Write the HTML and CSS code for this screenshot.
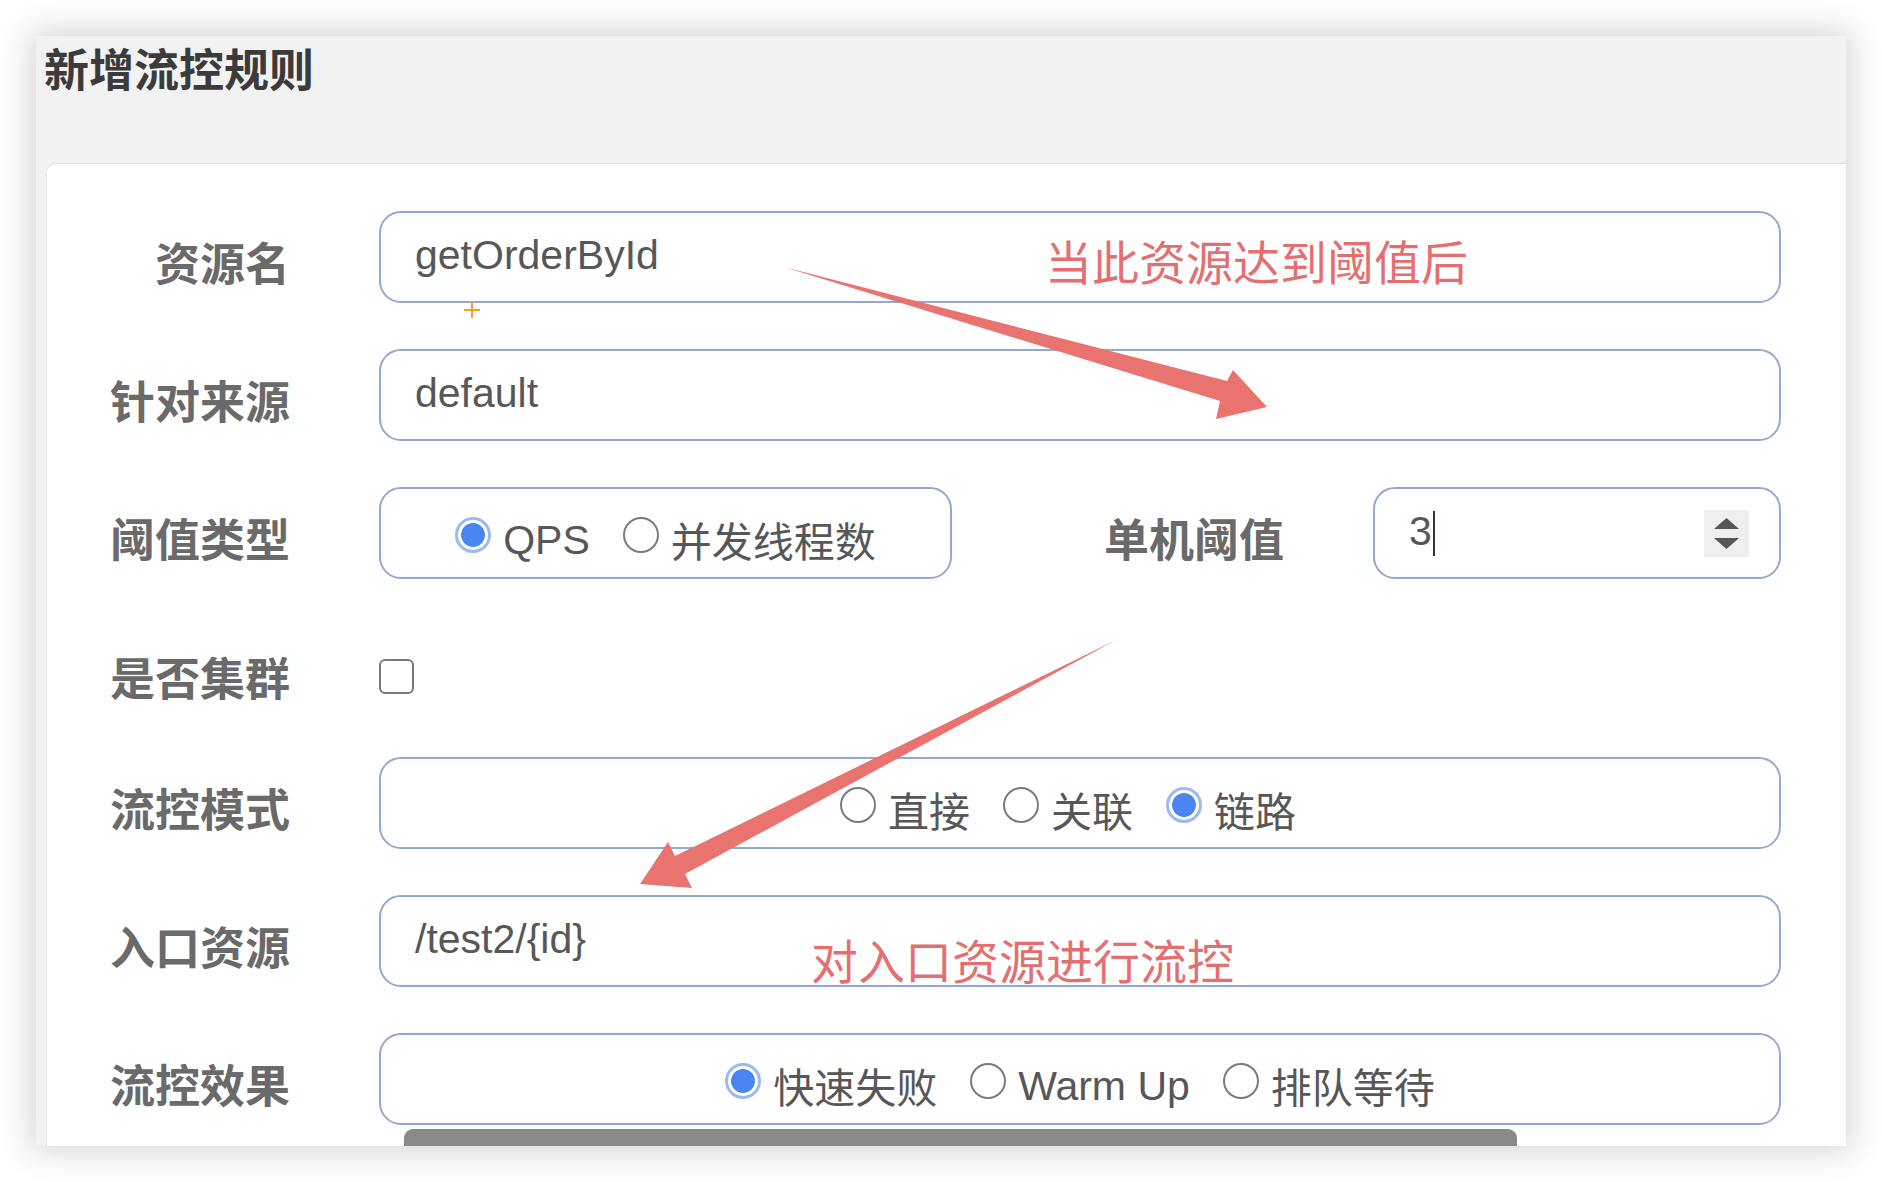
FILE: index.html
```html
<!DOCTYPE html>
<html lang="zh-CN">
<head>
<meta charset="utf-8">
<title>新增流控规则</title>
<link rel="stylesheet" href="styles.css">
</head>
<body>
<div class="modal">
  <div class="modal-header">
    <h3 class="modal-title">新增流控规则</h3>
  </div>
  <div class="modal-body">
    <form class="form">
      <div class="form-row">
        <label class="form-label">资源名</label>
        <div class="field"><span class="field-text">getOrderById</span></div>
      </div>
      <div class="form-row">
        <label class="form-label">针对来源</label>
        <div class="field"><span class="field-text">default</span></div>
      </div>
      <div class="form-row">
        <label class="form-label">阈值类型</label>
        <div class="field field--radios field--type">
          <span class="radio radio--checked"></span><span class="radio-text radio-text--latin">QPS</span>
          <span class="radio"></span><span class="radio-text">并发线程数</span>
        </div>
        <label class="form-label sub-label">单机阈值</label>
        <div class="field field--number">
          <span class="num-value"><span class="field-text">3</span><span class="caret"></span></span>
          <span class="spinner">
            <svg width="25" height="11" viewBox="0 0 25 11"><polygon points="12.5,0 25,11 0,11" fill="#555"/></svg>
            <svg width="25" height="11" viewBox="0 0 25 11"><polygon points="0,0 25,0 12.5,11" fill="#555"/></svg>
          </span>
        </div>
      </div>
      <div class="form-row form-row--check">
        <label class="form-label form-label--check">是否集群</label>
        <span class="checkbox"></span>
      </div>
      <div class="form-row">
        <label class="form-label">流控模式</label>
        <div class="field field--radios field--mode">
          <span class="radio"></span><span class="radio-text">直接</span>
          <span class="radio"></span><span class="radio-text">关联</span>
          <span class="radio radio--checked"></span><span class="radio-text">链路</span>
        </div>
      </div>
      <div class="form-row">
        <label class="form-label">入口资源</label>
        <div class="field"><span class="field-text">/test2/{id}</span></div>
      </div>
      <div class="form-row">
        <label class="form-label">流控效果</label>
        <div class="field field--radios">
          <span class="radio radio--checked"></span><span class="radio-text">快速失败</span>
          <span class="radio"></span><span class="radio-text radio-text--latin">Warm Up</span>
          <span class="radio"></span><span class="radio-text">排队等待</span>
        </div>
      </div>
    </form>
  </div>
  <div class="scroll-thumb"></div>
</div>

<svg class="annot" width="1882" height="1182" viewBox="0 0 1882 1182">
  <polygon points="784,267 1227,381 1233,370 1267,407 1216,419 1220,401" fill="#e9746f"/>
  <polygon points="1116,640 675,856 668,842 640,884 692,888 685,874" fill="#e9746f"/>
</svg>
<div class="note note--top">当此资源达到阈值后</div>
<div class="note note--bottom">对入口资源进行流控</div>
<div class="cursor-plus"></div>
</body>
</html>
```

FILE: styles.css
```css
html, body {
  margin: 0;
}
body {
  position: relative;
  width: 1882px;
  height: 1182px;
  overflow: hidden;
  background: #ffffff;
  padding: 36px 0 0 36px;
  box-sizing: border-box;
  font-family: "Noto Sans CJK SC", sans-serif;
}

.modal {
  position: relative;
  width: 1810px;
  height: 1110px;
  background: #f2f2f2;
  box-shadow: 0 0 30px 6px rgba(0, 0, 0, 0.16);
  overflow: hidden;
  display: flex;
  flex-direction: column;
}

.modal-header {
  flex: none;
  height: 127px;
  box-sizing: border-box;
  padding: 9px 0 0 8px;
}
.modal-title {
  margin: 0;
  font-size: 45px;
  line-height: 1;
  font-weight: 700;
  color: #3b3b3b;
}

.modal-body {
  flex: 1;
  margin-left: 10px;
  background: #ffffff;
  border-top: 1px solid #e0e0e0;
  border-left: 1px solid #e6e6e6;
  border-top-left-radius: 10px;
  padding-top: 47px;
}

.form {
  margin: 0;
  padding-right: 65px;
}
.form-row {
  display: flex;
  align-items: center;
  height: 92px;
  margin-bottom: 46px;
}
.form-row--check {
  height: 86px;
  padding-top: 16px;
  box-sizing: border-box;
}

.form-label {
  flex: none;
  width: 243px;
  margin-right: 89px;
  text-align: right;
  font-size: 45px;
  font-weight: 700;
  line-height: 1;
  color: #6a6a6a;
  padding-top: 9px;
}
.form-label--check {
  padding-top: 0;
}
.sub-label {
  flex: 1;
  width: auto;
}

.field {
  flex: none;
  box-sizing: border-box;
  width: 1402px;
  height: 92px;
  border: 2px solid #93a9d0;
  border-radius: 22px;
  display: flex;
  align-items: center;
  padding-left: 34px;
  font-family: "Liberation Sans", "Noto Sans CJK SC", sans-serif;
  font-size: 41px;
  color: #575757;
}
.field-text {
  line-height: 1;
  padding-bottom: 3px;
}

.field--radios {
  justify-content: center;
  padding-left: 0;
}
.field--type {
  width: 573px;
}
.field--mode {
  padding-right: 24px;
}

.field--number {
  width: 408px;
  justify-content: space-between;
  padding-right: 30px;
}
.num-value {
  display: flex;
  align-items: center;
}
.caret {
  width: 2px;
  height: 45px;
  background: #333;
  margin-left: 1px;
}
.spinner {
  width: 45px;
  height: 47px;
  background: #efefef;
  display: flex;
  flex-direction: column;
  align-items: center;
  justify-content: center;
  gap: 9px;
}
.spinner svg {
  display: block;
}

.radio {
  flex: none;
  box-sizing: border-box;
  width: 36px;
  height: 36px;
  border-radius: 50%;
  border: 2.5px solid #7b7b7b;
  background: #ffffff;
  margin-right: 12px;
  margin-top: 4px;
}
.radio--checked {
  border: 3px solid #9bb9f3;
  background: radial-gradient(circle, #4a85f2 0 11.5px, #ffffff 12.3px);
}
.radio-text {
  line-height: 1;
  padding-top: 21px;
  margin-right: 33px;
}
.radio-text:last-child {
  margin-right: 0;
}
.radio-text--latin {
  padding-top: 15px;
}

.checkbox {
  flex: none;
  box-sizing: border-box;
  width: 35px;
  height: 35px;
  border: 2.5px solid #7a7a7a;
  border-radius: 6px;
  background: #ffffff;
}

.scroll-thumb {
  position: absolute;
  left: 368px;
  bottom: 0;
  width: 1113px;
  height: 17px;
  background: #8a8a8a;
  border-radius: 9px 9px 0 0;
}

.annot {
  position: absolute;
  left: 0;
  top: 0;
  pointer-events: none;
}
.note {
  position: absolute;
  font-family: "Noto Sans CJK SC", sans-serif;
  font-size: 47px;
  line-height: 1;
  font-weight: 400;
  color: #e56f70;
  white-space: nowrap;
}
.note--top {
  left: 1045px;
  top: 236px;
}
.note--bottom {
  left: 811px;
  top: 935px;
}

.cursor-plus {
  position: absolute;
  left: 464px;
  top: 302px;
  width: 16px;
  height: 16px;
  background:
    linear-gradient(#f0a02a, #f0a02a) center / 2px 16px no-repeat,
    linear-gradient(#f0a02a, #f0a02a) center / 16px 2px no-repeat;
}
```
